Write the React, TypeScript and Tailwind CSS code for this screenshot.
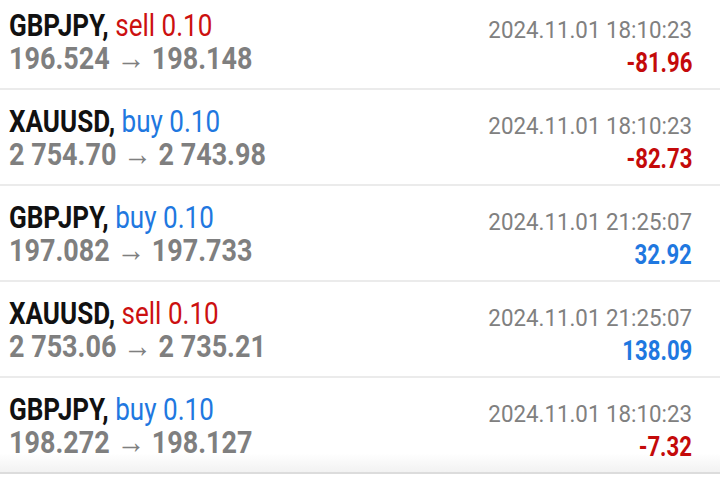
type Deal = {
  symbol: string
  side: 'buy' | 'sell'
  volume: string
  open: string
  close: string
  time: string
  profit: string
}

const deals: Deal[] = [
  { symbol: 'GBPJPY', side: 'sell', volume: '0.10', open: '196.524', close: '198.148', time: '2024.11.01 18:10:23', profit: '-81.96' },
  { symbol: 'XAUUSD', side: 'buy', volume: '0.10', open: '2 754.70', close: '2 743.98', time: '2024.11.01 18:10:23', profit: '-82.73' },
  { symbol: 'GBPJPY', side: 'buy', volume: '0.10', open: '197.082', close: '197.733', time: '2024.11.01 21:25:07', profit: '32.92' },
  { symbol: 'XAUUSD', side: 'sell', volume: '0.10', open: '2 753.06', close: '2 735.21', time: '2024.11.01 21:25:07', profit: '138.09' },
  { symbol: 'GBPJPY', side: 'buy', volume: '0.10', open: '198.272', close: '198.127', time: '2024.11.01 18:10:23', profit: '-7.32' },
]

function DealRow({ deal, last }: { deal: Deal; last: boolean }) {
  const loss = deal.profit.startsWith('-')
  return (
    <div
      className={
        'h-[96px] flex justify-between pl-[9px] pr-[28px] ' +
        (last ? 'bg-gradient-to-b from-white from-80% to-[#f2f2f2] border-b-2 border-[#dcdcdc]' : 'border-b-2 border-[#ebebeb]')
      }
    >
      <div className="pt-[16px] flex flex-col items-start">
        <span className="inline-block origin-left scale-x-[0.84] whitespace-nowrap text-[31px] leading-[32px]">
          <span className="font-bold text-[#111]">{deal.symbol},</span>{' '}
          <span className={deal.side === 'sell' ? 'text-[#cc1010]' : 'text-[#1f78e0]'}>
            {deal.side} {deal.volume}
          </span>
        </span>
        <span className="inline-block origin-left scale-x-[0.87] whitespace-nowrap text-[31px] leading-[32px] font-bold text-[#7f7f7f]">
          {deal.open} <span className="font-normal text-[33px]">→</span> {deal.close}
        </span>
      </div>
      <div className="pt-[19px] flex flex-col items-end">
        <span className="inline-block origin-right scale-x-[0.93] whitespace-nowrap text-[24px] leading-[34px] text-[#808080]">
          {deal.time}
        </span>
        <span
          className={
            'inline-block origin-right scale-x-[0.82] whitespace-nowrap text-[27px] leading-[32px] font-bold ' +
            (loss ? 'text-[#c40a0a]' : 'text-[#1f78e0]')
          }
        >
          {deal.profit}
        </span>
      </div>
    </div>
  )
}

export default function App() {
  return (
    <div className="w-[720px] h-[487px] overflow-hidden bg-white font-['Roboto',sans-serif]">
      <div className="-mt-[6px]">
        {deals.map((d, i) => (
          <DealRow key={i} deal={d} last={i === deals.length - 1} />
        ))}
      </div>
    </div>
  )
}
